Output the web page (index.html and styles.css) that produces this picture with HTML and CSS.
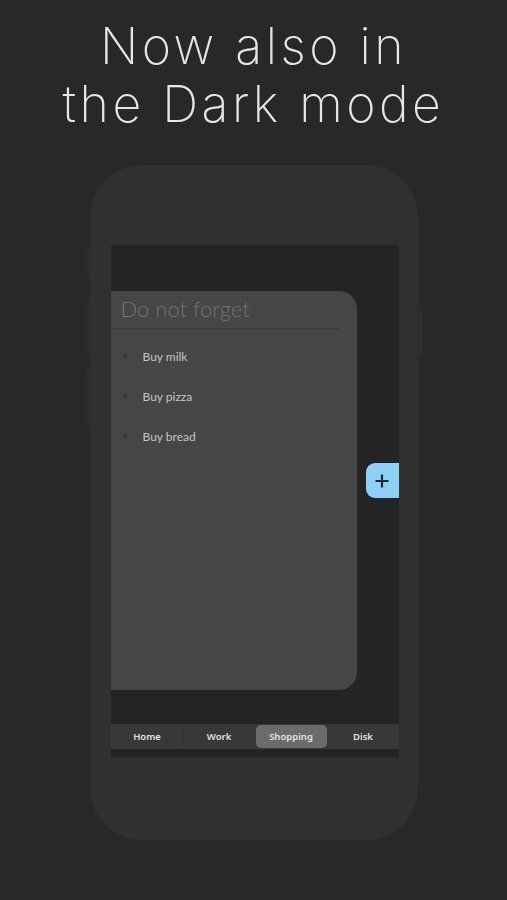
FILE: index.html
```html
<!DOCTYPE html>
<html lang="en">

<head>
    <meta charset="UTF-8">
    <meta name="viewport" content="width=device-width, initial-scale=1.0">
    <title>Dark mode</title>

    <link rel="stylesheet" href="styles.css">
</head>

<body>
    <div id="base">
        <h1 class="headline">Now also in<br>the Dark mode</h1>

        <div class="phone">
            <span class="side_btn btn_mute"></span>
            <span class="side_btn btn_up"></span>
            <span class="side_btn btn_down"></span>
            <span class="side_btn btn_power"></span>

            <div class="screen">
                <div class="board">
                    <div class="card">
                        <div class="card_title">Do not forget</div>
                        <ul class="todo">
                            <li>Buy milk</li>
                            <li>Buy pizza</li>
                            <li>Buy bread</li>
                        </ul>
                    </div>
                    <div class="add_btn">
                        <svg width="16" height="16" viewBox="0 0 16 16">
                            <path d="M8 1.5v13M1.5 8h13" stroke="#1d2a33" stroke-width="2.2" fill="none" />
                        </svg>
                    </div>
                </div>

                <div class="tabs">
                    <span class="tab">Home</span>
                    <span class="tab">Work</span>
                    <span class="tab active">Shopping</span>
                    <span class="tab">Disk</span>
                </div>
            </div>
        </div>
    </div>
</body>

</html>
```

FILE: styles.css
```css
* {
    box-sizing: border-box;
}

body {
    margin: 0;
    background-color: #282828;
    font-family: "Lato", "Open Sans", sans-serif;
}

#base {
    width: 100%;
    height: 900px;
    display: flex;
    flex-direction: column;
    align-items: center;
}

.headline {
    margin: 17px 0 0;
    font-family: "Inter", "Lato", sans-serif;
    font-weight: 250;
    font-size: 50px;
    line-height: 58px;
    letter-spacing: 3.5px;
    text-align: center;
    color: #e6e6e6;
}

.phone {
    position: relative;
    margin-top: 32px;
    width: 328px;
    height: 675px;
    border-radius: 52px;
    background-color: #303030;
    padding: 80px 19px 0 21px;
}

.side_btn {
    position: absolute;
    width: 5px;
    background-color: #2d2d2d;
    border-radius: 2px;
}

.btn_mute {
    left: -4px;
    top: 83px;
    height: 28px;
}

.btn_up {
    left: -4px;
    top: 135px;
    height: 55px;
}

.btn_down {
    left: -4px;
    top: 205px;
    height: 55px;
}

.btn_power {
    right: -4px;
    top: 140px;
    height: 52px;
}

.screen {
    height: 512px;
    background-color: #242424;
    display: flex;
    flex-direction: column;
    overflow: hidden;
}

.board {
    display: flex;
    flex-direction: row;
    align-items: flex-start;
    padding-top: 46px;
    height: 479px;
}

.card {
    width: 246px;
    height: 399px;
    background-color: #464646;
    border-radius: 0 18px 18px 0;
    padding: 4px 16px 0 0;
}

.card_title {
    padding-left: 10px;
    height: 34px;
    font-weight: 300;
    font-size: 22px;
    line-height: 28px;
    color: #727272;
    border-bottom: 1px solid #3a3a3a;
}

.todo {
    list-style: none;
    margin: 0;
    padding: 7px 0 0 12px;
}

.todo li {
    display: flex;
    align-items: center;
    height: 40px;
    font-size: 12px;
    color: #c4c4c4;
}

.todo li::before {
    content: "";
    width: 4px;
    height: 4px;
    margin-right: 16px;
    border-radius: 50%;
    background-color: #363636;
}

.add_btn {
    margin: 172px 0 0 auto;
    width: 33px;
    height: 35px;
    background-color: #8fd1f6;
    border-radius: 9px 0 0 9px;
    display: flex;
    align-items: center;
    justify-content: center;
}

.tabs {
    height: 25px;
    background-color: #383838;
    display: flex;
    flex-direction: row;
    align-items: center;
    padding: 0 0 0 1px;
}

.tab {
    flex: 1;
    height: 23px;
    display: flex;
    align-items: center;
    justify-content: center;
    font-size: 9.5px;
    font-weight: 600;
    color: #e2e2e2;
    font-family: "Noto Sans", sans-serif;
}

.tab:first-child {
    border-right: 1px solid #333;
    height: 16px;
}

.tab.active {
    background-color: #6b6b6b;
    border-radius: 5px;
    margin: 0 1px;
}
```
